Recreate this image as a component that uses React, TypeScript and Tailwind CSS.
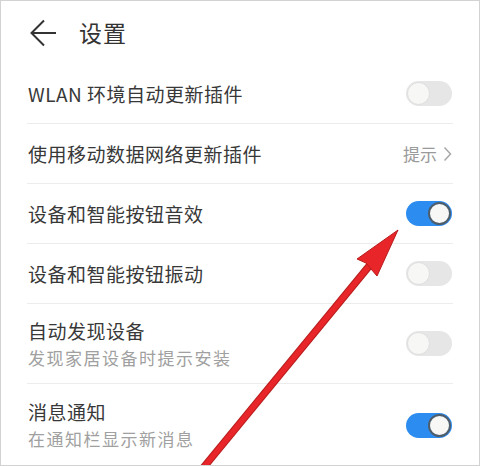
import React from "react";

const FONT = '"Noto Sans CJK SC", "Noto Sans", sans-serif';

interface Row {
  title: string;
  subtitle?: string;
  control: "on" | "off" | "hint";
}

const ROWS: Row[] = [
  { title: "WLAN 环境自动更新插件", control: "off" },
  { title: "使用移动数据网络更新插件", control: "hint" },
  { title: "设备和智能按钮音效", control: "on" },
  { title: "设备和智能按钮振动", control: "off" },
  { title: "自动发现设备", subtitle: "发现家居设备时提示安装", control: "off" },
  { title: "消息通知", subtitle: "在通知栏显示新消息", control: "on" },
];

function Toggle({ on }: { on: boolean }) {
  return (
    <div
      className={`flex h-[25px] w-[46px] items-center rounded-full px-[1px] ${
        on ? "justify-end bg-[#2d8cf0]" : "justify-start bg-[#e6e6e6]"
      }`}
    >
      <div
        className={`h-[23px] w-[23px] rounded-full bg-[#f7f8f6] ${
          on ? "border-2 border-[#4d5d6b]" : "border border-[#dedede]"
        }`}
      />
    </div>
  );
}

function Hint() {
  return (
    <div className="flex items-center gap-[6px] text-[17px] text-[#9a9a9a]">
      <span>提示</span>
      <svg width="9" height="16" viewBox="0 0 9 16" fill="none">
        <path d="M1.5 1.5 L7.5 8 L1.5 14.5" stroke="#a8a8a8" strokeWidth="1.5" />
      </svg>
    </div>
  );
}

export default function App() {
  return (
    <div
      className="relative h-[466px] w-[480px] overflow-hidden border border-[#d2d2d2] bg-white"
      style={{ fontFamily: FONT }}
    >
      <header className="flex h-[63px] items-center gap-[22px] pl-[29px]">
        <svg width="27" height="28" viewBox="0 0 27 28" fill="none">
          <path d="M14 1.5 L1.5 14 L14 26.5 M1.5 14 H26" stroke="#333" strokeWidth="2" />
        </svg>
        <h1 className="text-[23px] leading-none text-[#333] tracking-[1px]">设置</h1>
      </header>

      <div className="px-[26px]">
        {ROWS.map((row, i) => (
          <div
            key={row.title}
            className={`flex items-center justify-between border-[#ececec] ${
              i < ROWS.length - 1 ? "border-b" : ""
            } ${row.subtitle ? (i === ROWS.length - 1 ? "h-[82px]" : "h-[80px]") : "h-[60px]"}`}
          >
            <div className="flex flex-col pl-[1px]">
              <span className="text-[19px] leading-[26px] tracking-[0.5px] text-[#383838]">
                {row.title}
              </span>
              {row.subtitle ? (
                <span className="mt-[2px] text-[17px] leading-[24px] tracking-[1.5px] text-[#a0a0a0]">
                  {row.subtitle}
                </span>
              ) : null}
            </div>
            <div className="pr-[1px]">
              {row.control === "hint" ? <Hint /> : <Toggle on={row.control === "on"} />}
            </div>
          </div>
        ))}
      </div>

      {/* red annotation arrow */}
      <svg className="pointer-events-none absolute inset-0" width="480" height="466" viewBox="0 0 480 466">
        <line x1="198" y1="472" x2="369" y2="264" stroke="#b81c1c" strokeWidth="7.5" />
        <line x1="198" y1="472" x2="369" y2="264" stroke="#e8262a" strokeWidth="5.5" />
        <polygon
          points="397,229 356,258 365,262 370,268 376,275"
          fill="#e8262a"
          stroke="#b81c1c"
          strokeWidth="1"
          strokeLinejoin="round"
        />
      </svg>
    </div>
  );
}
